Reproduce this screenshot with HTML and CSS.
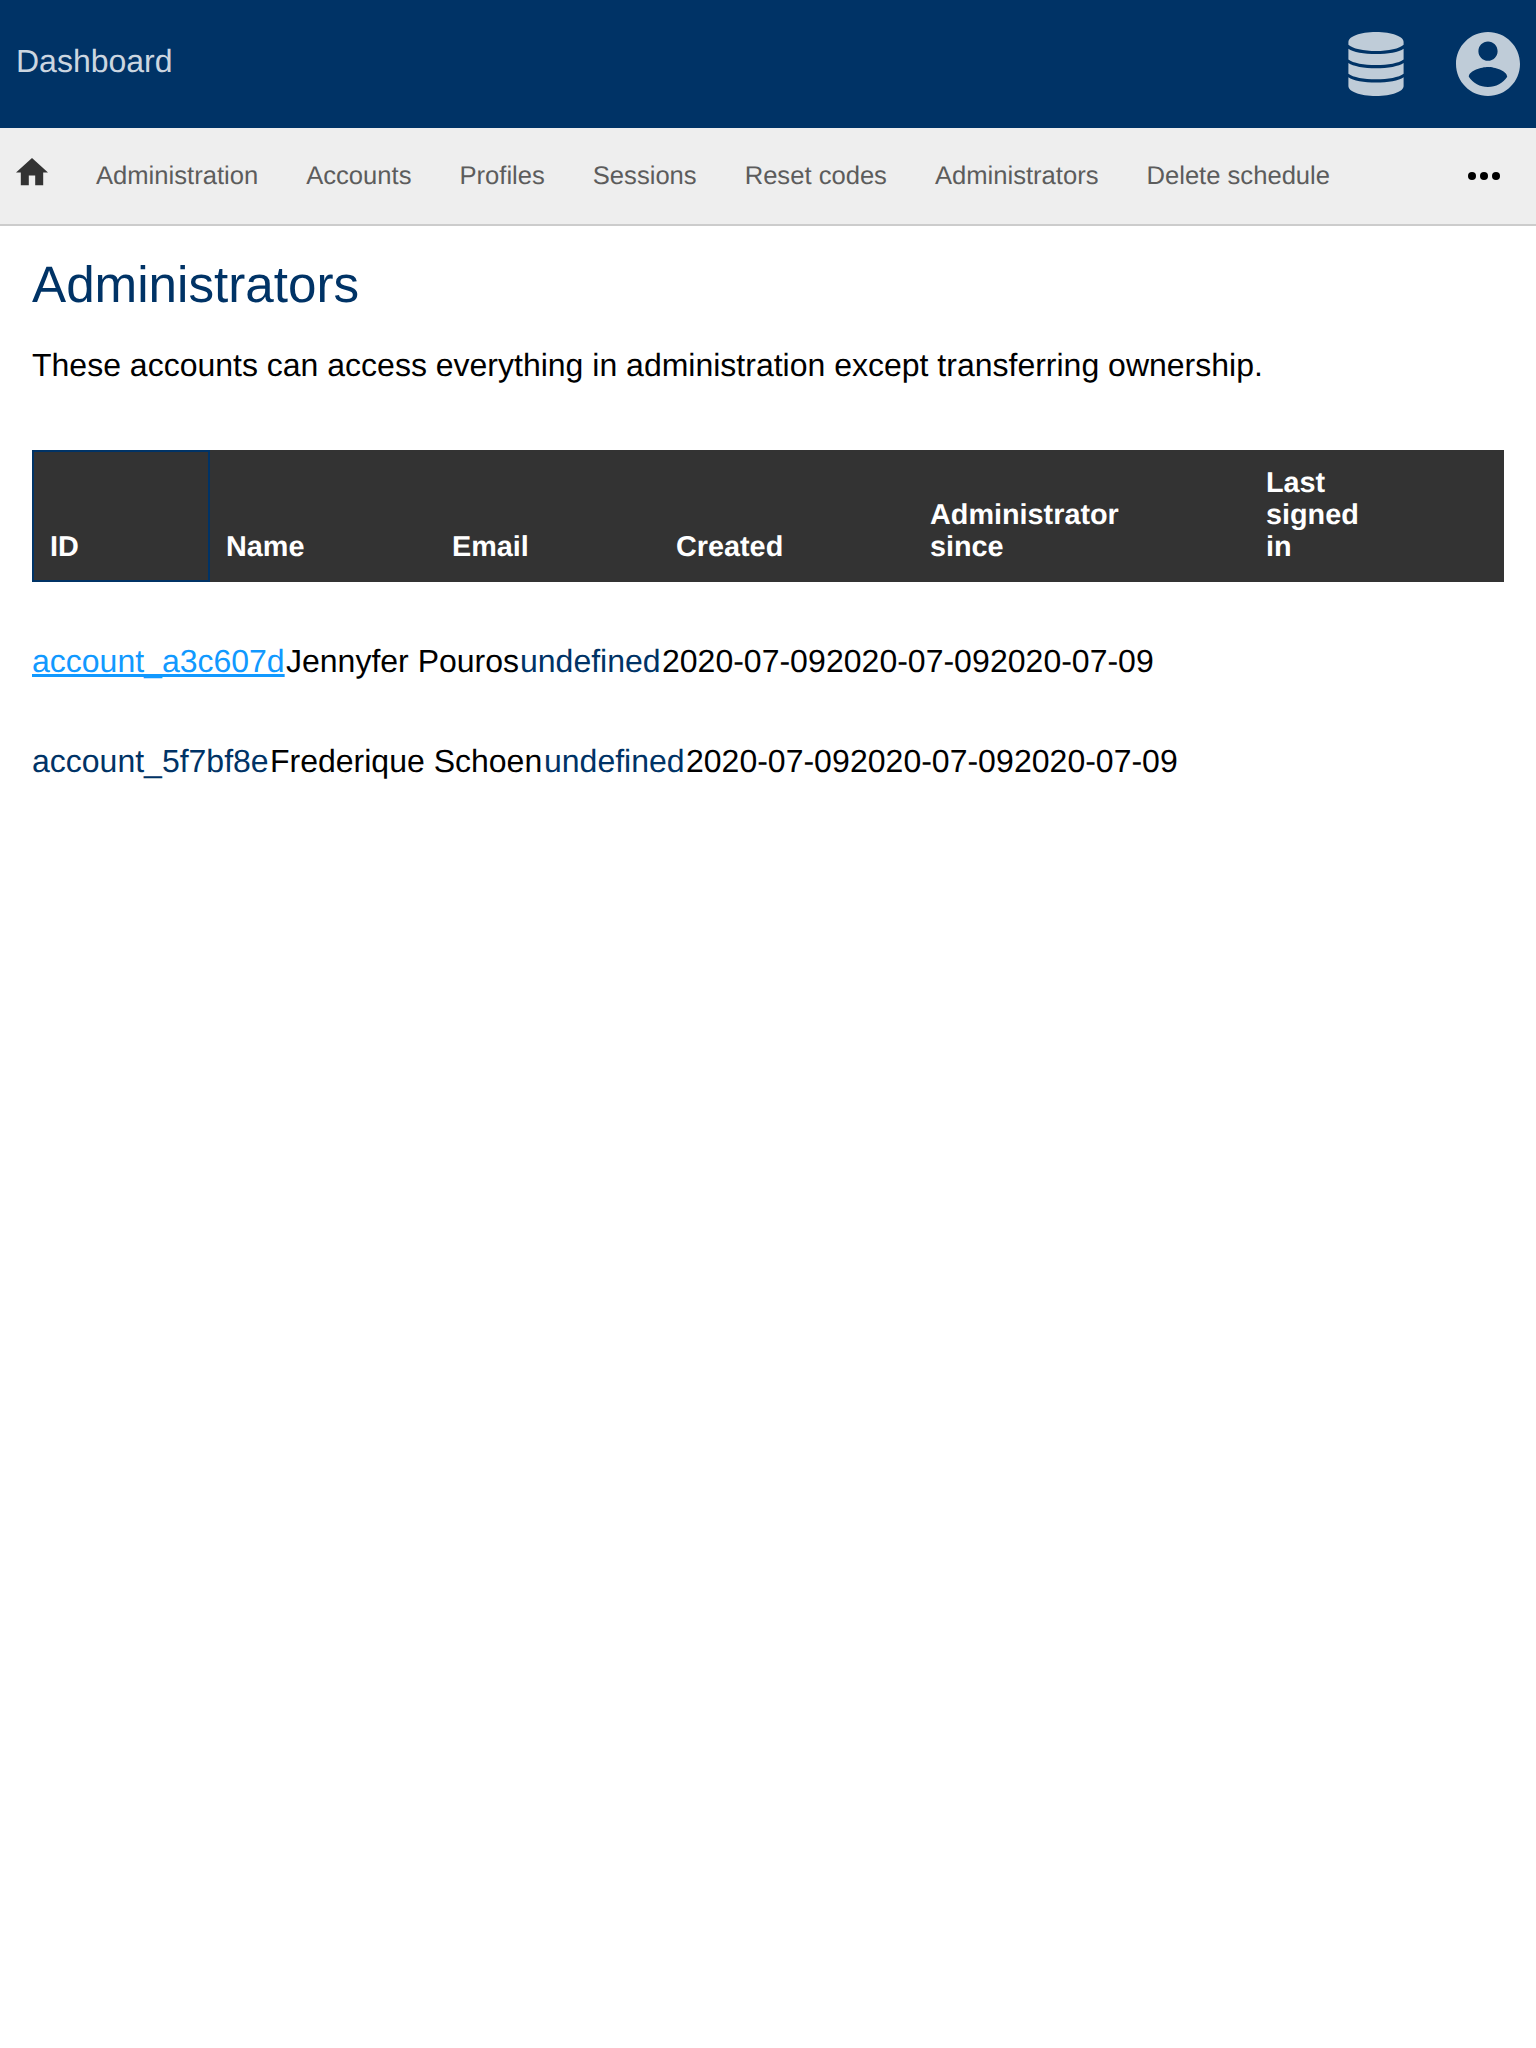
FILE: index.html
```html
<!DOCTYPE html>
<html lang="en">
<head>
<meta charset="utf-8">
<title>Administrators</title>
<link rel="stylesheet" href="styles.css">
</head>
<body>
<header class="header">
  <a class="brand">Dashboard</a>
  <div class="menus">
    <svg class="icon-db" viewBox="0 0 56 64">
      <path d="M28 0C44 0 55.600 4.500 55.600 10V12.700C52 16.500 40 19 28 19S4 16.500 .4 12.700V10C.4 4.500 12 0 28 0Z"/>
      <path d="M.4 16.700C5 20 16 22 28 22S51 20 55.600 16.700V27.500C51 31.200 40 33 28 33S5 31.200 .4 27.500Z"/>
      <path d="M.4 31C5 34.300 16 36.300 28 36.300S51 34.300 55.600 31V41.800C51 45.500 40 47.300 28 47.300S5 45.500 .4 41.800Z"/>
      <path d="M.4 45.200C5 48.500 16 50.500 28 50.500S51 48.500 55.600 45.200V54C55.600 59.500 44 64 28 64S.4 59.500 .4 54Z"/>
    </svg>
    <svg class="icon-user" viewBox="2 2 20 20">
      <path d="M12 2C6.480 2 2 6.480 2 12s4.480 10 10 10 10-4.480 10-10S17.520 2 12 2zm0 3c1.660 0 3 1.340 3 3s-1.340 3-3 3-3-1.340-3-3 1.340-3 3-3zm0 14.200c-2.500 0-4.710-1.280-6-3.220.030-1.990 4-3.080 6-3.080 1.990 0 5.970 1.090 6 3.080-1.290 1.940-3.500 3.220-6 3.220z"/>
    </svg>
  </div>
</header>
<nav class="nav">
  <svg class="icon-home" viewBox="2 3 20 17"><path d="M10 20v-6h4v6h5v-8h3L12 3 2 12h3v8z"/></svg>
  <a>Administration</a>
  <a>Accounts</a>
  <a>Profiles</a>
  <a>Sessions</a>
  <a>Reset codes</a>
  <a>Administrators</a>
  <a>Delete schedule</a>
  <svg class="icon-more" viewBox="0 0 32 8"><circle cx="4" cy="4" r="4"/><circle cx="16" cy="4" r="4"/><circle cx="28" cy="4" r="4"/></svg>
</nav>
<main class="content">
  <h1>Administrators</h1>
  <p class="intro">These accounts can access everything in administration except transferring ownership.</p>
  <div class="thead">
    <div class="th sorted">ID</div>
    <div class="th">Name</div>
    <div class="th">Email</div>
    <div class="th">Created</div>
    <div class="th">Administrator<br>since</div>
    <div class="th">Last<br>signed<br>in</div>
  </div>
  <div class="row first">
    <span><a class="hover">account_a3c607d</a></span>
    <span>Jennyfer Pouros</span>
    <span><a>undefined</a></span>
    <span>2020-07-09</span>
    <span>2020-07-09</span>
    <span>2020-07-09</span>
  </div>
  <div class="row second">
    <span><a>account_5f7bf8e</a></span>
    <span>Frederique Schoen</span>
    <span><a>undefined</a></span>
    <span>2020-07-09</span>
    <span>2020-07-09</span>
    <span>2020-07-09</span>
  </div>
</main>
</body>
</html>
```

FILE: styles.css
```css
* {
  box-sizing: border-box;
}

body {
  margin: 0;
  min-height: 2048px;
  background: #fff;
  color: #000;
  font: 32px/36px "Liberation Sans", Arial, sans-serif;
  text-rendering: geometricPrecision;
}

.header {
  display: flex;
  justify-content: space-between;
  height: 128px;
  padding: 32px 16px;
  background: #036;
}

.brand {
  padding-top: 11px;
  color: #ccd6e0;
}

.menus {
  display: flex;
  gap: 52px;
  fill: #bfccd8;
}

.icon-db {
  width: 56px;
  height: 64px;
}

.icon-user {
  width: 64px;
  height: 64px;
}

.nav {
  display: flex;
  align-items: center;
  gap: 48px;
  height: 98px;
  padding: 0 36px 0 16px;
  background: #eee;
  border-bottom: 2px solid #ccc;
  color: #5c5c5c;
  font-size: 25.6px;
  line-height: 32px;
}

.icon-home {
  width: 32px;
  height: 27.2px;
  margin-bottom: 8px;
  fill: #333;
}

.icon-more {
  width: 32px;
  height: 8px;
  margin-left: auto;
}

.content {
  padding: 30px 32px;
}

h1 {
  margin: 0;
  color: #036;
  font-size: 51.2px;
  font-weight: 400;
  line-height: 58px;
}

.intro {
  margin: 33px 0 67px;
}

.thead {
  display: grid;
  grid-template-columns: 178px 226px 224px 254px 336px 1fr;
  height: 132px;
  margin-bottom: 61px;
  background: #333;
  color: #fff;
  font-size: 28.8px;
  font-weight: 700;
  line-height: 32px;
}

.th {
  display: flex;
  align-items: flex-end;
  padding: 16px 16px 19px;
}

.sorted {
  border: 2px solid #036;
  padding: 14px 16px 17px;
}

.row {
  display: grid;
  margin-bottom: 64px;
  white-space: nowrap;
}

.first {
  grid-template-columns: 254px 234px 142px 164px 164px 164px;
}

.second {
  grid-template-columns: 238px 274px 142px 164px 164px 164px;
}

.row a {
  color: #036;
}

.row .hover {
  color: #19f;
  text-decoration: underline;
  text-decoration-skip-ink: none;
}
```
